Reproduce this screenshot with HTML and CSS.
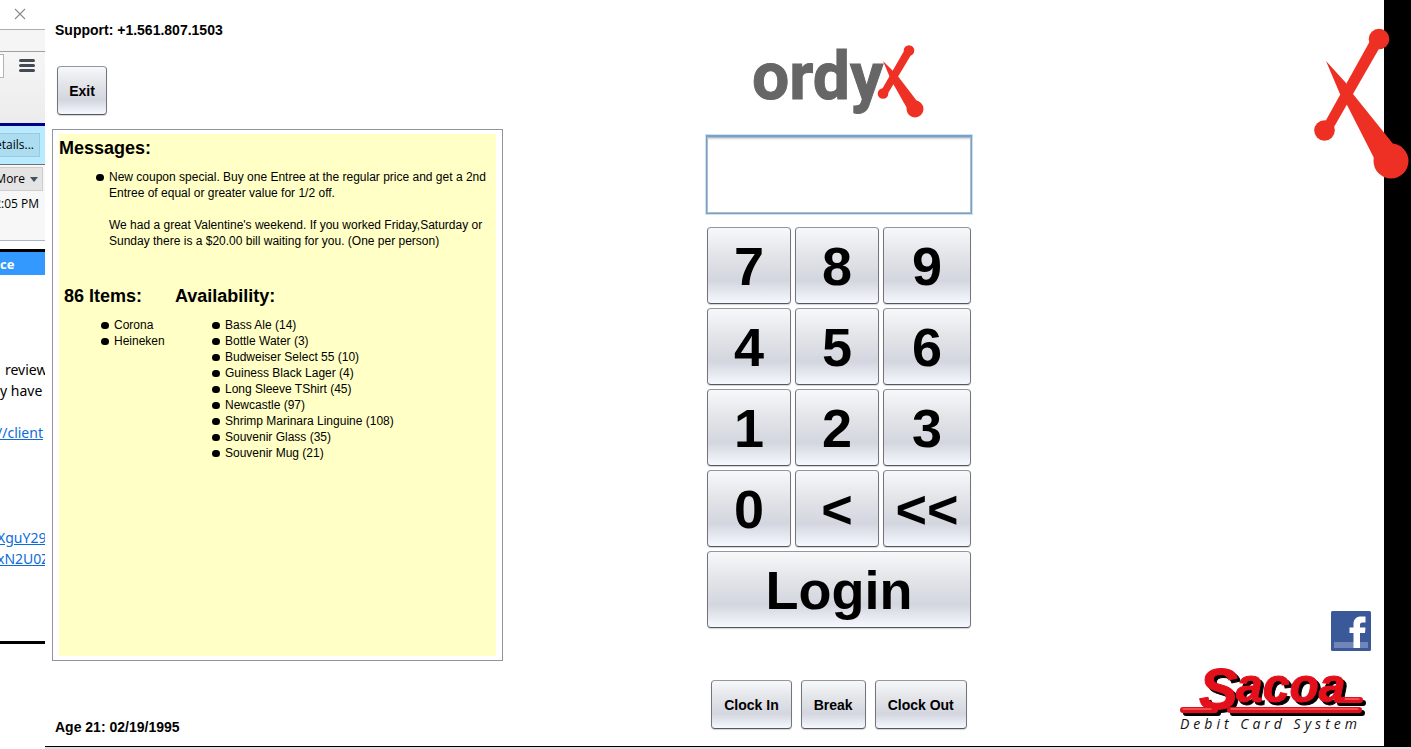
FILE: index.html
```html
<!DOCTYPE html>
<html lang="en">
<head>
<meta charset="utf-8">
<title>Ordyx Login</title>
<link rel="stylesheet" href="styles.css">
</head>
<body>
<div class="desktop">
  <aside class="browser">
    <div class="titlebar">
      <button class="close" aria-label="Close"><svg width="12" height="12" viewBox="0 0 12 12"><path d="M1 1L11 11M11 1L1 11" stroke="#8a8a8a" stroke-width="1.1"/></svg></button>
    </div>
    <div class="tabs"></div>
    <div class="toolbar">
      <span class="urlbox"></span>
      <button class="menu" aria-label="Menu"><svg width="16" height="13" viewBox="0 0 16 13"><path d="M1.5 1.5H14.5M1.5 6.5H14.5M1.5 11.5H14.5" stroke="#444a54" stroke-width="3" stroke-linecap="round"/></svg></button>
    </div>
    <div class="notice"><button class="details">etails...</button></div>
    <div class="mailhead">
      <button class="more">More <svg width="8" height="5" viewBox="0 0 8 5"><path d="M0 0H8L4 5Z" fill="#46515e"/></svg></button>
      <span class="time">2:05 PM</span>
    </div>
    <div class="banner">ce</div>
    <div class="mail">
      <p class="line indent">review</p>
      <p class="line">y have</p>
      <p class="line gap"><a href="#">//client</a></p>
      <p class="line far"><a href="#">XguY29</a></p>
      <p class="line"><a href="#">xN2U0Z</a></p>
    </div>
  </aside>

  <main class="app">
    <section class="left">
      <p class="label">Support: +1.561.807.1503</p>
      <button class="btn exit">Exit</button>
      <div class="panel">
        <div class="note">
          <h2>Messages:</h2>
          <ul class="messages">
            <li><div>New coupon special. Buy one Entree at the regular price and get a 2nd<br>Entree of equal or greater value for 1/2 off.<br><br>We had a great Valentine's weekend. If you worked Friday,Saturday or<br>Sunday there is a $20.00 bill waiting for you. (One per person)</div></li>
          </ul>
          <div class="stock">
            <div>
              <h2>86 Items:</h2>
              <ul><li>Corona</li><li>Heineken</li></ul>
            </div>
            <div>
              <h2>Availability:</h2>
              <ul>
                <li>Bass Ale (14)</li>
                <li>Bottle Water (3)</li>
                <li>Budweiser Select 55 (10)</li>
                <li>Guiness Black Lager (4)</li>
                <li>Long Sleeve TShirt (45)</li>
                <li>Newcastle (97)</li>
                <li>Shrimp Marinara Linguine (108)</li>
                <li>Souvenir Glass (35)</li>
                <li>Souvenir Mug (21)</li>
              </ul>
            </div>
          </div>
        </div>
      </div>
      <p class="label age">Age 21: 02/19/1995</p>
    </section>

    <section class="center">
      <svg class="logo" width="172" height="76" viewBox="0 0 172 76" role="img" aria-label="ordyx">
        <text class="wordmark" x="-1" y="55">ordy</text>
        <g fill="#ee3124">
          <circle cx="156" cy="6.500" r="5.300"/><circle cx="130" cy="49.500" r="5.300"/><circle cx="162" cy="65" r="8.500"/>
          <path d="M151 7L158 11L134 51L128 47Z"/><path d="M130 17L144 31L167 61L155 66L138 36Z"/>
        </g>
      </svg>
      <input class="pin" type="password" aria-label="PIN">
      <div class="keypad">
        <button class="btn key">7</button><button class="btn key">8</button><button class="btn key">9</button>
        <button class="btn key">4</button><button class="btn key">5</button><button class="btn key">6</button>
        <button class="btn key">1</button><button class="btn key">2</button><button class="btn key">3</button>
        <button class="btn key">0</button><button class="btn key">&lt;</button><button class="btn key">&lt;&lt;</button>
        <button class="btn key login">Login</button>
      </div>
      <div class="clock">
        <button class="btn">Clock In</button>
        <button class="btn">Break</button>
        <button class="btn">Clock Out</button>
      </div>
    </section>

    <section class="right">
      <a class="facebook" href="#" aria-label="Facebook">
        <svg width="40" height="40" viewBox="0 0 40 40"><rect width="40" height="40" rx="1.5" fill="#3b5998"/><rect x="3" y="31" width="34" height="6" fill="#7186b8"/><path d="M22.500 37V22H18.500V16.500H22.500V13C22.500 8 25.500 5.500 30 5.500H34.500V11.500H31.500C29.500 11.500 29 12.500 29 14V16.500H34.500L34 22H29V37Z" fill="#fff"/></svg>
      </a>
      <svg class="sacoa" width="188" height="70" viewBox="0 0 188 70" role="img" aria-label="Sacoa Debit Card System">
        <g class="tube">
          <path d="M4 46H36M51 46H180M158 36H181"/>
          <text class="script" x="20" y="45"><tspan class="cap">S</tspan><tspan x="57" y="38">acoa</tspan></text>
        </g>
        <path class="shine" d="M4 45H32M52 45H179M166 35H180"/>
        <text class="tagline" x="1" y="65">Debit Card System</text>
      </svg>
    </section>
  </main>

  <div class="edge"></div>
  <div class="taskbar"></div>
  <svg class="mark" width="95" height="152" viewBox="0 0 95 152" aria-hidden="true">
    <g fill="#ee3024">
      <circle cx="65" cy="11" r="10.300"/><circle cx="10.500" cy="102.500" r="10.300"/><circle cx="77" cy="133" r="17.500"/>
      <path d="M56 13L66 19L20 99L11 94Z"/><path d="M12 33L32 55L39 66L80 117L60 130L32 75L26 66Z"/>
    </g>
  </svg>
</div>
</body>
</html>
```
FILE: styles.css
```css
* { box-sizing: border-box; }
body { margin: 0; background: #fff; color: #000; font: 12px/16px "Liberation Sans", Arial, sans-serif; }
p, h2, ul { margin: 0; padding: 0; }
button { font: inherit; color: inherit; }

.desktop { position: relative; display: grid; grid-template-columns: 45px 1fr 27px; grid-template-rows: 1fr 3px; min-height: 100vh; overflow: hidden; }
.edge { background: #000; }
.taskbar { grid-column: 2 / 4; background: #dcdfdd; border-top: 1px solid #000; }
.mark { position: absolute; top: 28px; right: 2px; }

/* Browser window behind the app */
.browser { grid-row: 1 / 3; overflow: hidden; white-space: nowrap; font-family: "Open Sans", sans-serif; }
.browser button { border: 0; background: none; padding: 0; }
.titlebar { height: 30px; padding: 8px 0 0 14px; border-bottom: 1px solid #a5adb5; }
.close, .menu { display: block; line-height: 0; }
.tabs { height: 22px; background: #f5f5f5; border-bottom: 1px solid #a0a0a0; }
.toolbar { display: flex; justify-content: space-between; height: 71px; padding: 2px 10px 0 0; background: linear-gradient(#f6f6f6, #ececec); }
.urlbox { width: 4px; height: 24px; background: #fff; border: 1px solid #b4b4b4; border-left: 0; }
.menu { align-self: flex-start; margin-top: 5px; }
.notice { display: flex; justify-content: flex-end; height: 42px; padding: 7px 5px 0 0; background: #b8ebff; border-top: 3px solid #00008b; border-bottom: 1px solid #707070; }
.browser .details { height: 24px; padding: 0 5px; background: #abdcf0; border: 1px solid #9cc9dd; }
.mailhead { display: flex; flex-direction: column; align-items: flex-end; gap: 5px; height: 76px; padding: 2px 2px 0 0; background: #f7f7f7; border-bottom: 1px solid #a9b7c9; }
.browser .more { display: flex; align-items: center; gap: 5px; height: 24px; padding: 0 4px; background: #e4e4e4; border: 1px solid #cdcdcd; }
.time { padding-right: 4px; }
.banner { margin-top: 8px; height: 26px; border-top: 3px solid #000; background: #3399ff; color: #fff; font-weight: bold; font-size: 13px; line-height: 24px; }
.mail { height: 369px; padding-top: 84px; border-bottom: 3px solid #000; font: 14px/21px "Noto Sans", sans-serif; }
.mail .indent { padding-left: 5px; }
.mail .gap { margin-top: 21px; }
.mail .far { margin-top: 84px; }
.mail a { margin-left: -3px; color: #0b6cda; }

/* Login screen */
.app { display: grid; grid-template-columns: 458px 1fr 209px; }
.left { display: flex; flex-direction: column; padding: 22px 0 11px 7px; }
.label { padding-left: 3px; font-size: 14px; font-weight: bold; }
.btn { border: 1px solid #71757c; border-color: #94989e #71757c #54575e; border-radius: 4px; background: linear-gradient(#f7f8fa 0%, #e3e5e9 35%, #d3d6de 70%, #f6f8ff 100%); box-shadow: 0 1px 1px #d4d4d4; padding: 0 12px; font-size: 14px; font-weight: bold; }
.exit { align-self: flex-start; margin: 28px 0 14px 5px; width: 50px; height: 49px; padding: 0; }
.panel { flex: 1; border: 1px solid #8f949e; padding: 4px 6px; }
.note { height: 100%; padding-top: 3px; background: #ffffc6; }
.age { margin-top: 58px; }
h2 { font-size: 18px; line-height: 22px; }
ul { list-style: none; }
li { display: flex; gap: 5px; white-space: nowrap; }
li::before { content: ""; flex: none; width: 8px; height: 7px; margin-top: 5px; border-radius: 4px; background: #000; }
.messages { padding: 10px 0 0 37px; }
.stock { display: flex; gap: 30px; padding: 36px 0 0 5px; }
.stock ul { padding: 10px 0 0 37px; }
.stock > div:first-child { width: 81px; }

.center { display: flex; flex-direction: column; align-items: center; padding: 44px 0 17px; }
.wordmark { font: bold 66px Roboto, sans-serif; fill: #666; stroke: #666; stroke-width: 1px; }
.pin { width: 266px; height: 79px; margin: 15px 0 13px; padding: 0 12px; border: 1px solid #6fa3d4; border-top-width: 2px; outline: 0; background: #fff; box-shadow: 0 0 0 1px #cfe0f1, inset 0 0 0 1px #b9b9b9, inset 0 2px 2px #d2d2d2; font-size: 54px; }
.keypad { display: grid; grid-template-columns: 84fr 84fr 88fr; gap: 4px; width: 264px; }
.key { height: 77px; padding: 0; font-size: 54px; line-height: 62px; }
.login { grid-column: 1 / -1; }
.clock { display: flex; gap: 9px; margin-top: auto; }
.clock .btn { height: 49px; }

.right { display: flex; flex-direction: column; justify-content: flex-end; align-items: flex-end; gap: 13px; padding: 0 13px 12px 0; }
.facebook { display: block; height: 40px; }
.sacoa { margin-right: 4px; }
.script { font: italic bold 48px "Liberation Sans", Arial, sans-serif; stroke-width: 1px; }
.cap { font-size: 58px; }
.sacoa path { fill: none; stroke-width: 6px; stroke-linecap: round; }
.tube { fill: #e3101c; stroke: #e3101c; filter: drop-shadow(3px 3px 0 #000); }
.sacoa .shine { stroke: #ff8a8a; stroke-width: 1px; }
.tagline { font: italic 14px "Open Sans", sans-serif; letter-spacing: 4px; fill: #111; }
```
